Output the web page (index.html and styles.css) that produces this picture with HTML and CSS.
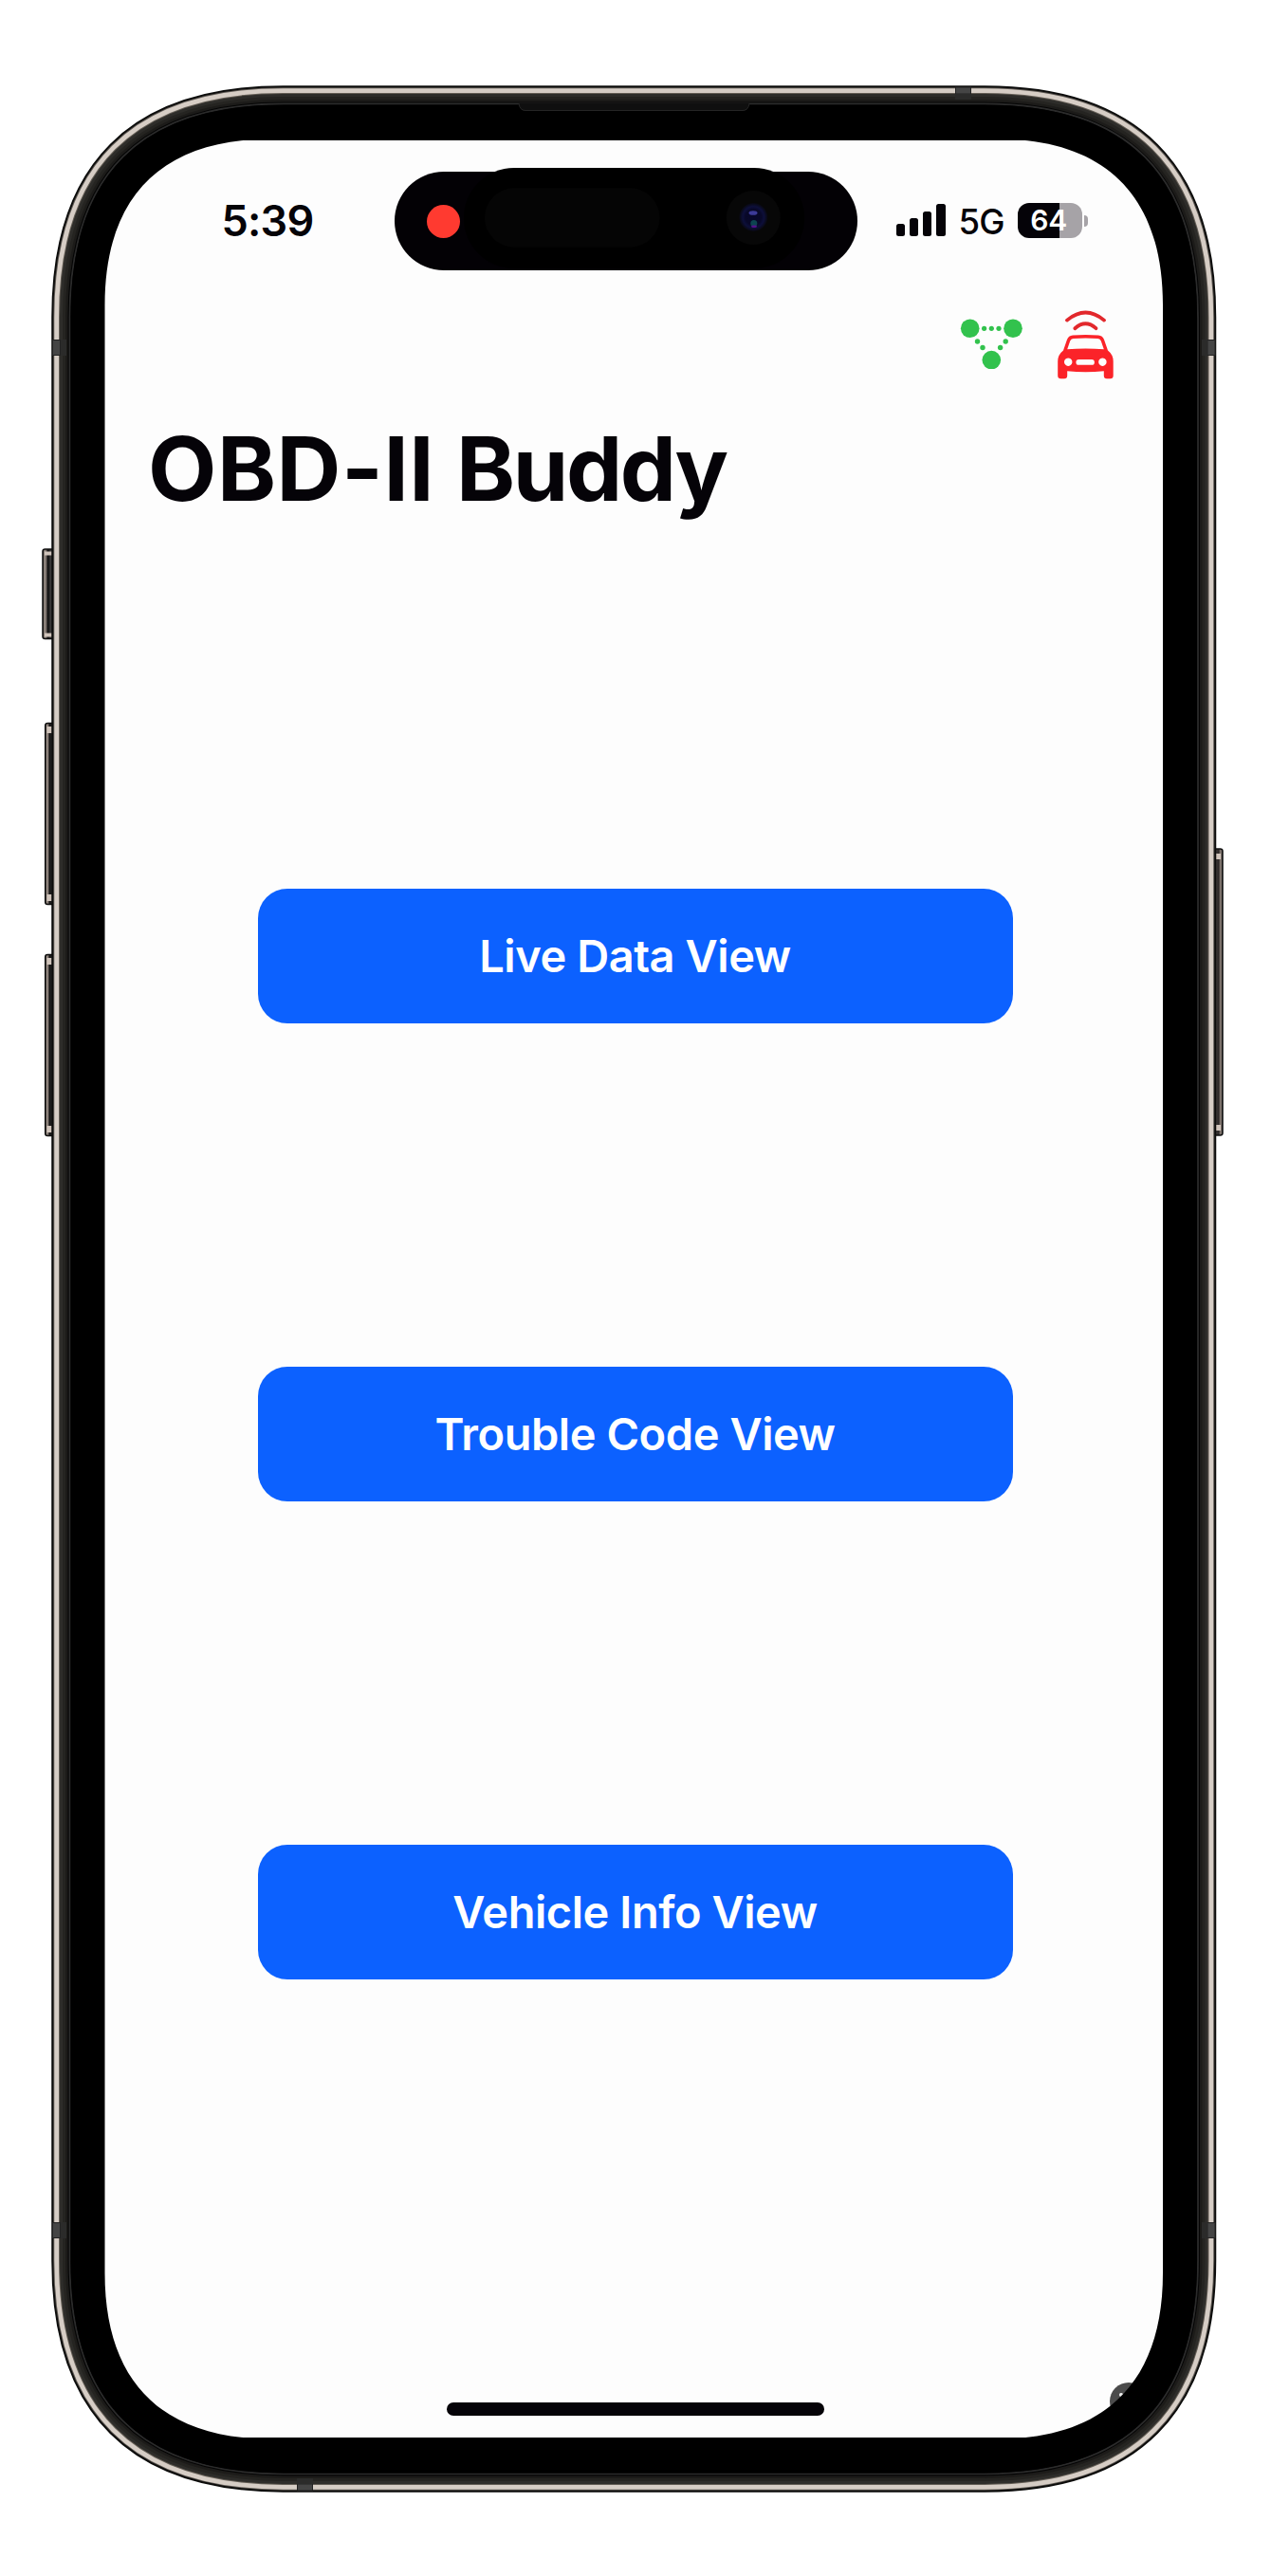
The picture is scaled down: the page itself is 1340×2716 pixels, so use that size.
FILE: index.html
```html
<!DOCTYPE html>
<html lang="en">
<head>
<meta charset="utf-8">
<title>OBD-II Buddy</title>
<link rel="stylesheet" href="styles.css">
</head>
<body>
<div class="device">
  <main class="screen">
    <header class="status">
      <div class="time">5:39</div>
      <div class="island">
        <span class="record-dot"></span>
      </div>
      <div class="indicators">
        <div class="signal"><i class="bar bar1"></i><i class="bar bar2"></i><i class="bar bar3"></i><i class="bar bar4"></i></div>
        <span class="network">5G</span>
        <div class="battery"><span class="level">64</span></div>
        <i class="battery-cap"></i>
      </div>
    </header>
    <nav class="toolbar">
      <svg class="icon-nodes" width="66" height="54" viewBox="1012 335 66 54" fill="#32c24d">
        <circle cx="1022.7" cy="346.3" r="9.8"/><circle cx="1068" cy="346.3" r="9.8"/><circle cx="1045.3" cy="379.6" r="9.8"/>
        <circle cx="1037.6" cy="346.3" r="2.6"/><circle cx="1045.3" cy="346.3" r="2.6"/><circle cx="1053" cy="346.3" r="2.6"/>
        <circle cx="1030.5" cy="360" r="2.7"/><circle cx="1036" cy="366.5" r="2.7"/>
        <circle cx="1060.2" cy="360" r="2.7"/><circle cx="1054.6" cy="366.5" r="2.7"/>
      </svg>
      <svg class="icon-car" width="66" height="78" viewBox="1111 324 66 78" fill="#fb2329">
        <g fill="none" stroke="#e2282c" stroke-width="3.8" stroke-linecap="round">
          <path d="M1125 337.6Q1144.5 321.4 1164 337.6"/>
          <path d="M1133.3 346.2Q1144.5 336.4 1155.5 346.2"/>
        </g>
        <path fill-rule="evenodd" d="M1131 353.6Q1144.5 352.4 1158 353.6Q1162.5 354 1164 358L1168 369.5Q1173.7 374 1173.7 381V396Q1173.7 399.2 1170.5 399.2H1167Q1163.8 399.2 1163.8 396V391.3Q1144.5 393 1125.2 391.3V396Q1125.2 399.2 1122 399.2H1118.5Q1115.2 399.2 1115.2 396V381Q1115.2 374 1121 369.5L1125 358Q1126.5 354 1131 353.6ZM1131.5 356.9Q1129 357 1128.2 359.5L1125.2 368.3Q1144.5 366.5 1163.8 368.3L1160.8 359.5Q1160 357 1157.5 356.9Q1144.5 355.9 1131.5 356.9ZM1126.2 377.5a4.2 4.2 0 1 0 .01 0ZM1162.4 377.5a4.2 4.2 0 1 0 .01 0ZM1137.3 379a2.9 2.9 0 0 0 0 5.8H1151a2.9 2.9 0 0 0 0-5.8Z"/>
      </svg>
    </nav>
    <h1 class="title">OBD-II <span class="title-word">Buddy</span></h1>
    <section class="actions">
      <button class="action" type="button">Live Data View</button>
      <button class="action" type="button">Trouble Code View</button>
      <button class="action" type="button">Vehicle Info View</button>
    </section>
    <div class="home-indicator"></div>
    <div class="corner-badge"></div>
  </main>

  <svg class="frame" width="1340" height="2716" viewBox="0 0 1340 2716">
    <defs>
      <linearGradient id="keyL"><stop offset="0" stop-color="#111"/><stop offset=".14" stop-color="#a79b92"/><stop offset=".3" stop-color="#5b5350"/><stop offset=".38" stop-color="#0c0c0c"/><stop offset=".65" stop-color="#454343"/><stop offset="1" stop-color="#1c1c1c"/></linearGradient>
      <linearGradient id="keyR"><stop offset="0" stop-color="#1c1c1c"/><stop offset=".4" stop-color="#413d3d"/><stop offset=".65" stop-color="#2a2625"/><stop offset=".85" stop-color="#9a8d85"/><stop offset="1" stop-color="#111"/></linearGradient>
      <radialGradient id="lens"><stop offset="0" stop-color="#07072a"/><stop offset=".55" stop-color="#080828"/><stop offset=".75" stop-color="#0d0f3a"/><stop offset="1" stop-color="#08080f"/></radialGradient>
      <path id="edge" d="M298.5 109.5H1038C1188.7 109.5 1263 183.8 1263 334.5V2383.4C1263 2534.1 1188.7 2608.4 1038 2608.4H298.5C147.8 2608.4 73.5 2534.1 73.5 2383.4V334.5C73.5 183.8 147.8 109.5 298.5 109.5Z"/>
    </defs>

    <g class="keys">
      <g fill="url(#keyL)" stroke="#111" stroke-width="1.5">
        <rect x="45" y="579" width="14" height="94.5" rx="2.5"/>
        <rect x="47.7" y="762.5" width="12" height="191" rx="2.5"/>
        <rect x="47.7" y="1006.5" width="12" height="191" rx="2.5"/>
      </g>
      <g fill="#d0c4bb">
        <rect x="47" y="581.5" width="9" height="4"/><rect x="47" y="667.5" width="9" height="4"/>
        <rect x="49.5" y="766" width="6" height="7"/><rect x="49.5" y="943" width="6" height="7"/>
        <rect x="49.5" y="1010" width="6" height="7"/><rect x="49.5" y="1187" width="6" height="7"/>
      </g>
      <rect x="1277" y="895" width="12" height="302" rx="2.5" fill="url(#keyR)" stroke="#111" stroke-width="1.5"/>
      <path fill="#d0c4bb" d="M1282 900h5v6h-5ZM1282 1186h5v6h-5Z"/>
    </g>

    <g fill="none">
      <use href="#edge" stroke="#0c0c0b" stroke-width="38.5"/>
      <use href="#edge" stroke="#5a5550" stroke-width="34.5"/>
      <use href="#edge" stroke="#d6cdc5" stroke-width="32.5"/>
      <use href="#edge" stroke="#625c54" stroke-width="23"/>
      <use href="#edge" stroke="#2e2d2a" stroke-width="21"/>
      <use href="#edge" stroke="#252421" stroke-width="15"/>
      <use href="#edge" stroke="#1c1b19" stroke-width="9"/>
      <use href="#edge" stroke="#050505" stroke-width="4"/>
      <use href="#edge" stroke="#2b2b2b" stroke-width="1.8"/>
    </g>

    <g fill="#454545" stroke="#222" stroke-width="1">
      <rect x="55.5" y="358.5" width="8" height="16"/><rect x="55.5" y="2343.5" width="8" height="16"/>
      <rect x="1273" y="358.5" width="8" height="16"/><rect x="1273" y="2343.5" width="8" height="16"/>
      <rect x="1007.5" y="92" width="16" height="7"/><rect x="313.5" y="2619" width="16" height="7"/>
    </g>
    <g fill="#2b2b2a">
      <rect x="64" y="358" width="6" height="17"/><rect x="64" y="2343" width="6" height="17"/>
      <rect x="1267" y="358" width="6" height="17"/><rect x="1267" y="2343" width="6" height="17"/>
      <rect x="1007" y="99" width="17" height="6"/><rect x="313" y="2613" width="17" height="6"/>
    </g>

    <path fill="#000" fill-rule="evenodd" d="M298.5 110.5H1038C1188 110.5 1262 184.5 1262 334.5V2383.4C1262 2533.4 1188 2607.4 1038 2607.4H298.5C148.5 2607.4 74.5 2533.4 74.5 2383.4V334.5C74.5 184.5 148.5 110.5 298.5 110.5Z
      M285.5 146.5C170.8 146.5 110.5 206.8 110.5 321.5V2396.5C110.5 2511.2 170.8 2571.5 285.5 2571.5H1051C1165.7 2571.5 1226 2511.2 1226 2396.5V321.5C1226 206.8 1165.7 146.5 1051 146.5Z"/>
    <path d="M200 145H1136V148H200ZM200 2570H1136V2573H200Z" fill="#000"/>
    <path d="M547 109H790Q789 117 783 117H554Q548 117 547 109Z" fill="#0f0f0f"/>
    <path d="M547 109Q548 116.5 554 116.5H783Q789 116.5 790 109" fill="none" stroke="#252525"/>

    <rect x="489" y="177" width="359" height="106" rx="53" fill="#000"/>
    <rect x="511" y="198.3" width="184.5" height="62.4" rx="31.2" fill="#050505"/>
    <circle cx="794.3" cy="229.5" r="28.5" fill="#070707"/>
    <circle cx="794.3" cy="229" r="15" fill="url(#lens)"/>
    <ellipse cx="794" cy="224.5" rx="4.5" ry="2.3" fill="#3c3a98"/>
    <circle cx="794.8" cy="235.5" r="3.5" fill="#0c4450"/>
    <ellipse cx="795" cy="238.8" rx="3" ry="1.2" fill="#55108c"/>
  </svg>
</div>
</body>
</html>
```
FILE: styles.css
```css
* { box-sizing: border-box; }

body {
  margin: 0;
  background: #fff;
  font-family: Inter, "Liberation Sans", sans-serif;
}

.device {
  position: relative;
  width: 1340px;
  height: 2716px;
  padding: 148px 114px 146px 110px;
}

.frame {
  position: absolute;
  left: 0;
  top: 0;
  display: block;
  pointer-events: none;
}

.screen {
  position: relative;
  display: flex;
  flex-direction: column;
  height: 2422px;
  border-radius: 110px;
  overflow: hidden;
  background: #fdfdfd;
  color: #050308;
}

.status {
  display: flex;
  align-items: center;
  height: 104px;
  margin-top: 32.5px;
  padding-left: 123.5px;
}

.time {
  width: 182.5px;
  font-size: 45px;
  font-weight: 600;
  line-height: 54px;
  letter-spacing: -0.8px;
  white-space: nowrap;
}

.island {
  display: flex;
  align-items: center;
  width: 488px;
  height: 104px;
  padding: 1px 0 0 34px;
  border-radius: 52px;
  background: #030105;
}

.record-dot {
  width: 35px;
  height: 35px;
  border-radius: 50%;
  background: #ff3a30;
}

.indicators {
  display: flex;
  align-items: center;
  margin-left: 40.5px;
}

.signal {
  display: flex;
  align-items: flex-end;
  gap: 5px;
  width: 66px;
  height: 34px;
  margin-bottom: 2px;
}

.bar {
  width: 9.3px;
  border-radius: 2.5px;
  background: #050308;
}

.bar1 { height: 12.5px; }
.bar2 { height: 19px; }
.bar3 { height: 26px; }
.bar4 { height: 33.5px; }

.network {
  width: 62.5px;
  padding-top: 2px;
  font-size: 36.5px;
  font-weight: 500;
  line-height: 44px;
  letter-spacing: -0.8px;
}

.battery {
  display: flex;
  justify-content: center;
  align-items: center;
  width: 67.5px;
  height: 37px;
  padding-right: 2px;
  border-radius: 12px;
  background: linear-gradient(90deg, #050308 65%, #a6a3a7 65%);
}

.level {
  color: #fff;
  font-size: 30px;
  font-weight: 600;
  line-height: 37px;
}

.battery-cap {
  width: 4px;
  height: 12px;
  margin-left: 2px;
  border-radius: 0 5px 5px 0;
  background: #a6a3a7;
}

.toolbar {
  display: flex;
  align-items: flex-start;
  justify-content: flex-end;
  gap: 33px;
  height: 78px;
  margin: 39.5px 49px 0 0;
}

.icon-nodes { margin-top: 11px; }

.title {
  height: 114px;
  margin: 35px 0 0 46px;
  font-size: 94px;
  font-weight: 700;
  line-height: 114px;
  letter-spacing: 0.5px;
  white-space: nowrap;
}

.title-word { letter-spacing: -2.4px; }

.actions {
  display: flex;
  flex-direction: column;
  align-items: center;
  gap: 362px;
  margin-top: 386px;
  padding-left: 3px;
}

.action {
  width: 796px;
  height: 142px;
  padding: 0;
  border: 0;
  border-radius: 31px;
  background: #0c61ff;
  color: #fff;
  font-family: inherit;
  font-size: 47px;
  font-weight: 600;
  line-height: 142px;
  letter-spacing: -0.45px;
}

.home-indicator {
  width: 398px;
  height: 14px;
  margin: auto 357px 23px 360.5px;
  border-radius: 7px;
  background: #050308;
}

.corner-badge {
  position: absolute;
  right: 16.5px;
  bottom: 18px;
  width: 40px;
  height: 40px;
  border-radius: 50%;
  background: radial-gradient(circle at 12px 13px, #eee 1.5px, transparent 2.5px), #4b4b4b;
}
```
